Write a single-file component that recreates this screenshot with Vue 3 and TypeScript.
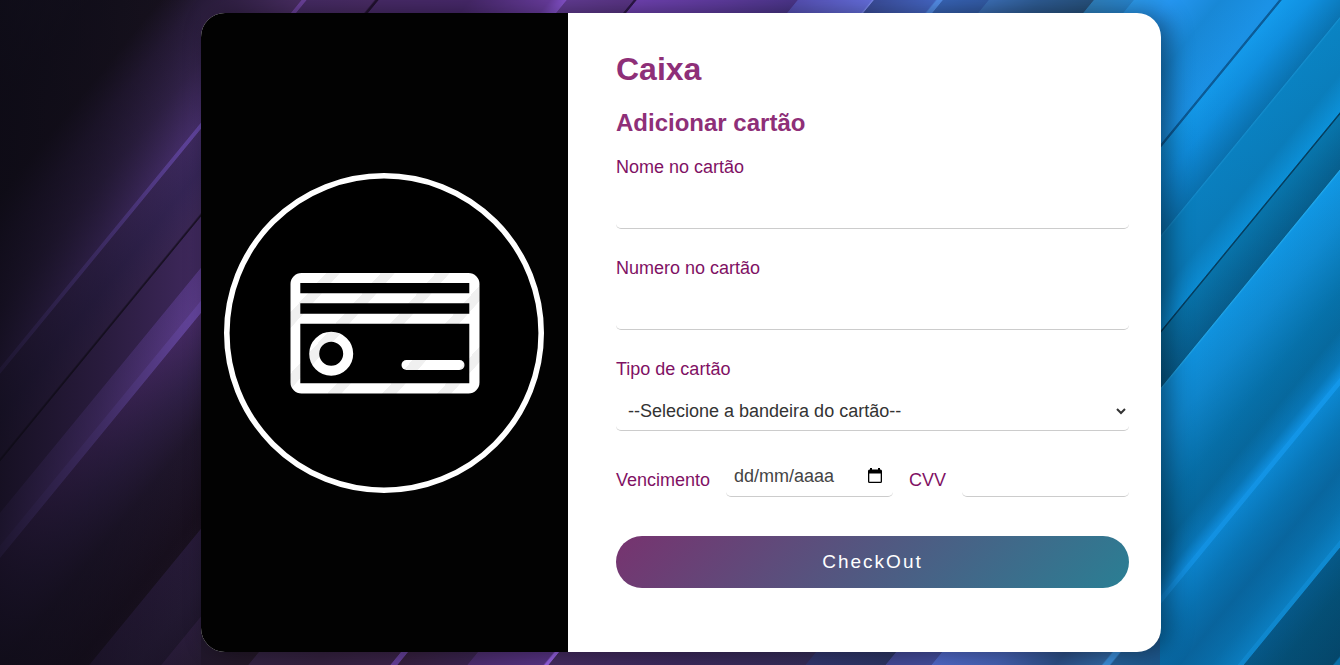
<script setup lang="ts">
import { ref } from 'vue'

interface Stop {
  at: number
  color: string
}

type Row = [number, string]

// Position of a band edge is its x coordinate on the top edge of the backdrop.
const AXIS = 2000
const toStops = (rows: Row[]): Stop[] =>
  rows.map(([at, color]) => ({ at: at / AXIS, color }))

const regions = [
  {
    id: 'left', x: 0, y: 0, width: 202, height: 665,
    stops: toStops([
      [0, '#1a1728'], [90, '#16121f'], [160, '#18121f'], [200, '#271b38'], [250, '#33234b'],
      [301, '#472f6c'], [302, '#6245a0'], [306, '#6245a0'], [307, '#402b62'],
      [340, '#38275a'], [375, '#3d2959'], [377, '#1c1228'], [378, '#1c1228'], [379, '#40295e'],
      [420, '#40295e'], [421, '#573985'], [447, '#5b3c8a'], [448, '#6646a0'], [457, '#6646a0'],
      [458, '#472b66'], [500, '#33224c'], [550, '#21172e'], [620, '#19101f'], [634, '#1a1120'],
      [635, '#281b3a'], [680, '#241a34'], [706, '#20172e'], [707, '#2b1d3c'], [745, '#241a30'],
    ]),
  },
  {
    id: 'top', x: 201, y: 0, width: 961, height: 332,
    stops: toStops([
      [200, '#271b38'], [301, '#4a2e64'], [302, '#6c429c'], [306, '#6c429c'], [307, '#462b64'],
      [374, '#4a2c66'], [376, '#221230'], [378, '#221230'], [379, '#482b68'], [470, '#48296c'],
      [550, '#6a3da0'], [560, '#7d4cc0'], [566, '#8653cc'], [567, '#633c94'], [633, '#5a3586'],
      [634, '#2d1748'], [636, '#2d1748'], [637, '#7042b2'], [720, '#603ca0'], [797, '#4c368c'],
      [798, '#5852b8'], [871, '#6670e0'], [873, '#8090f4'], [874, '#3c4f9e'], [935, '#4668c8'],
      [937, '#5590ec'], [942, '#5590ec'], [943, '#3865b8'], [988, '#335ca8'], [989, '#3c70b8'],
      [1040, '#2e5c94'], [1093, '#27527e'], [1094, '#3082c0'], [1133, '#2886d0'],
      [1134, '#2c9aec'], [1170, '#2597f2'],
    ]),
  },
  {
    id: 'bottom', x: 201, y: 332, width: 961, height: 333,
    stops: toStops([
      [730, '#20172b'], [793, '#241829'], [794, '#332342'], [860, '#34213f'], [935, '#3a2348'],
      [936, '#65409a'], [942, '#65409a'], [943, '#36203f'], [1012, '#3a2450'], [1013, '#4d2e70'],
      [1088, '#573384'], [1090, '#9460e0'], [1093, '#9460e0'], [1094, '#442b60'],
      [1220, '#3b295c'], [1350, '#352d59'], [1351, '#31366e'], [1430, '#2c3564'],
      [1431, '#434998'], [1476, '#434e9c'], [1477, '#5068c8'], [1540, '#4662b4'],
      [1600, '#2c4f86'], [1646, '#3065a0'], [1648, '#3a8dd8'], [1654, '#3a8dd8'],
      [1656, '#245f98'], [1720, '#195488'],
    ]),
  },
  {
    id: 'right', x: 1160, y: 0, width: 180, height: 665,
    stops: toStops([
      [1134, '#2c9aec'], [1170, '#2597f2'], [1220, '#1888d6'], [1272, '#1b92e6'], [1278, '#1b92e6'],
      [1279, '#0b5c98'], [1281, '#0b5c98'], [1282, '#149bec'], [1310, '#1090e0'],
      [1353, '#0a74b2'], [1354, '#1490d0'], [1356, '#0a84c4'], [1400, '#0a80be'],
      [1431, '#0c94dc'], [1432, '#054060'], [1433, '#054060'], [1434, '#0878ae'],
      [1478, '#07618f'], [1479, '#22b0f4'], [1481, '#119eec'], [1520, '#1092da'],
      [1580, '#0678b0'], [1610, '#0670a4'], [1635, '#0880c0'], [1649, '#0f9cee'],
      [1650, '#14a6fc'], [1655, '#14a6fc'], [1656, '#0c94e0'], [1690, '#0880c0'],
      [1725, '#0870a8'], [1755, '#087cb8'], [1782, '#0b90d4'], [1783, '#109ee8'],
      [1788, '#109ee8'], [1789, '#05608c'], [1825, '#035474'], [1877, '#034a66'],
      [1879, '#0a80b8'],
    ]),
  },
]

const brands = ['Visa', 'Mastercard', 'Elo', 'American Express']

const holder = ref('')
const cardNumber = ref('')
const brand = ref('')
const expiry = ref('')
const cvv = ref('')
</script>

<template>
  <div class="page">
    <svg class="backdrop" viewBox="0 0 1340 665" preserveAspectRatio="none" aria-hidden="true">
      <defs>
        <linearGradient
          v-for="r in regions" :id="`bands-${r.id}`" :key="r.id"
          gradientUnits="userSpaceOnUse" x1="0" y1="0" x2="1196" y2="981"
        >
          <stop v-for="s in r.stops" :key="s.at" :offset="s.at" :stop-color="s.color" />
        </linearGradient>
        <linearGradient id="fade-left">
          <stop offset="0" stop-color="#0c0a14" stop-opacity="0.8" />
          <stop offset="0.5" stop-color="#0c0a14" stop-opacity="0.45" />
          <stop offset="1" stop-color="#0c0a14" stop-opacity="0" />
        </linearGradient>
        <linearGradient id="fade-right" x1="0" y1="0" x2="0" y2="1">
          <stop offset="0" stop-color="#0a3c78" stop-opacity="0" />
          <stop offset="1" stop-color="#0a3c78" stop-opacity="0.25" />
        </linearGradient>
      </defs>
      <rect
        v-for="r in regions" :key="r.id"
        :x="r.x" :y="r.y" :width="r.width" :height="r.height" :fill="`url(#bands-${r.id})`"
      />
      <rect x="0" y="0" width="202" height="665" fill="url(#fade-left)" />
      <rect x="1160" y="0" width="180" height="665" fill="url(#fade-right)" />
    </svg>

    <main class="card">
      <div class="art">
        <svg viewBox="0 0 320 320" role="img" aria-label="Cartão de crédito">
          <defs>
            <linearGradient
              id="sheen" gradientUnits="userSpaceOnUse" spreadMethod="repeat"
              x1="106" y1="95.5" x2="136.4" y2="122.8"
            >
              <stop offset="0" stop-color="#f0f0f0" />
              <stop offset="0.25" stop-color="#f0f0f0" />
              <stop offset="0.26" stop-color="#ffffff" />
              <stop offset="1" stop-color="#ffffff" />
            </linearGradient>
          </defs>
          <circle cx="160" cy="160" r="157.2" fill="#000" stroke="#fff" stroke-width="5.6" />
          <path
            fill="url(#sheen)" fill-rule="evenodd"
            d="M77 100H244.500a11 11 0 0 1 11 11V209.500a11 11 0 0 1-11 11H77.500a11 11 0 0 1-11-11V111a11 11 0 0 1 11-11ZM76.300 110V120.300H245.300V110ZM76.300 130.300V140.700H245.300V130.300ZM76.300 150.700V210.300H245.300V150.700Z"
          />
          <circle cx="107.200" cy="180.700" r="17" fill="none" stroke="url(#sheen)" stroke-width="10" />
          <rect x="177.500" y="187" width="63" height="10" rx="5" fill="url(#sheen)" />
        </svg>
      </div>

      <form class="form" @submit.prevent>
        <h1>Caixa</h1>
        <h2>Adicionar cartão</h2>

        <div class="field">
          <label for="holder">Nome no cartão</label>
          <input id="holder" v-model="holder" type="text" autocomplete="cc-name" />
        </div>
        <div class="field">
          <label for="number">Numero no cartão</label>
          <input id="number" v-model="cardNumber" type="text" inputmode="numeric" autocomplete="cc-number" />
        </div>
        <div class="field">
          <label for="brand">Tipo de cartão</label>
          <select id="brand" v-model="brand">
            <option value="">--Selecione a bandeira do cartão--</option>
            <option v-for="b in brands" :key="b" :value="b">{{ b }}</option>
          </select>
        </div>

        <div class="row">
          <label for="expiry">Vencimento</label>
          <div class="slot">
            <input id="expiry" v-model="expiry" class="date" type="text" placeholder="dd/mm/aaaa" />
            <button class="picker" type="button" aria-label="Abrir calendário">
              <svg viewBox="0 0 14 16" aria-hidden="true">
                <path fill="#000" fill-rule="evenodd" d="M2 0H4V1.500H10V0H12V1.500H12.500A1.500 1.500 0 0 1 14 3V13.500A1.500 1.500 0 0 1 12.500 15H1.500A1.500 1.500 0 0 1 0 13.500V3A1.500 1.500 0 0 1 1.500 1.500H2ZM1.300 5.500V13.700H12.700V5.500Z" />
              </svg>
            </button>
          </div>
          <label for="cvv">CVV</label>
          <div class="slot">
            <input id="cvv" v-model="cvv" type="text" inputmode="numeric" autocomplete="cc-csc" />
          </div>
        </div>

        <button class="submit" type="submit">CheckOut</button>
      </form>
    </main>
  </div>
</template>

<style>
body {
  margin: 0;
}
</style>

<style scoped>
.page {
  position: relative;
  box-sizing: border-box;
  display: flex;
  align-items: center;
  justify-content: center;
  min-height: 100vh;
  padding: 12px 0 12px 22px;
  background: #16101f;
  font-family: "Liberation Sans", Arial, sans-serif;
  font-size: 18px;
}

.backdrop {
  position: absolute;
  inset: 0;
  width: 100%;
  height: 100%;
}

.card {
  position: relative;
  display: flex;
  width: 100%;
  max-width: 960px;
  overflow: hidden;
  border-radius: 24px;
  background: #fff;
  box-shadow: 8px 0 24px rgba(0, 0, 0, 0.45);
}

.art {
  box-sizing: border-box;
  display: flex;
  flex: 0 0 367px;
  align-items: center;
  justify-content: center;
  padding-right: 1px;
  background: #020202;
}

.art svg {
  width: 320px;
}

.form {
  display: flex;
  flex: 1;
  flex-direction: column;
  min-width: 0;
  padding: 36px 32px 64px 48px;
}

h1,
h2 {
  margin: 0 0 20px;
  color: #8e2f78;
}

h1 {
  font-size: 32px;
  line-height: 40px;
}

h2 {
  font-size: 24px;
  line-height: 28px;
}

label {
  color: #7f1164;
  line-height: 20px;
}

.field {
  display: flex;
  flex-direction: column;
  gap: 12px;
  margin-bottom: 29px;
}

input,
select {
  box-sizing: border-box;
  display: block;
  width: 100%;
  height: 40px;
  min-width: 0;
  padding: 0 8px;
  border: 0;
  border-bottom: 1px solid #ccc;
  border-radius: 5px;
  outline: 0;
  background: transparent;
  color: #333;
  font: inherit;
}

.row {
  display: flex;
  gap: 16px;
  align-items: flex-end;
  margin: -3px 0 39px;
}

.row label {
  line-height: 34px;
}

.slot {
  position: relative;
  flex: 1;
  min-width: 0;
}

.date {
  padding-right: 32px;
}

.date::placeholder {
  color: #444;
  opacity: 1;
}

.picker {
  position: absolute;
  top: 11px;
  right: 11px;
  display: flex;
  padding: 0;
  border: 0;
  background: none;
  cursor: pointer;
}

.picker svg {
  width: 14px;
  height: 16px;
}

.submit {
  height: 52px;
  padding: 0;
  border: 0;
  border-radius: 26px;
  background: linear-gradient(135deg, #77336f, #2a7f94);
  color: #fff;
  font: inherit;
  font-size: 19px;
  letter-spacing: 2px;
  cursor: pointer;
}
</style>
